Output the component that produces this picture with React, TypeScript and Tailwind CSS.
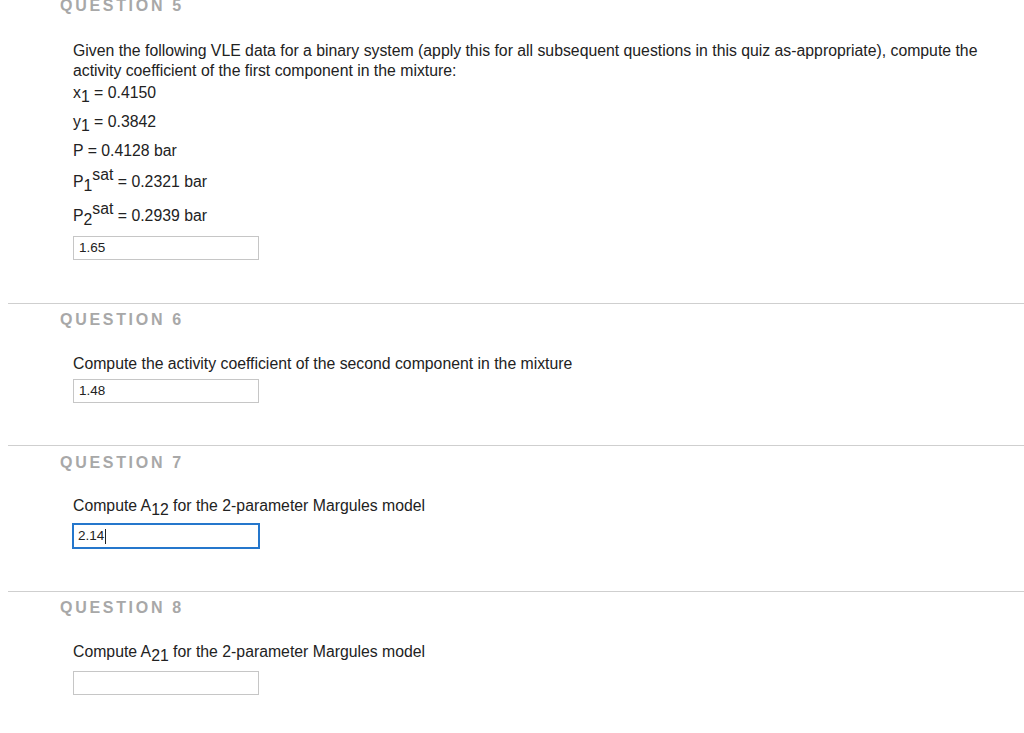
const body = "text-[15.8px] leading-[20px] text-[#222]"

const Header = ({ n, className = "" }: { n: number; className?: string }) => (
  <h3 className={`pl-[52px] text-[16px] leading-[20px] font-bold tracking-[2.7px] text-[#a8a8a8] ${className}`}>
    QUESTION {n}
  </h3>
)

const Answer = ({ value, focused }: { value?: string; focused?: boolean }) => (
  <div
    className={`flex items-center w-[186px] h-[24px] bg-white text-[13.5px] text-[#222] ${
      focused ? "border-2 border-[#2577cc] w-[188px] h-[26px] pl-[4px]" : "border border-[#c6c6c6] pl-[5px]"
    }`}
  >
    {value}
    {focused && <span className="ml-[1px] w-px h-[15px] bg-[#222]" />}
  </div>
)

const Sub = ({ children }: { children: string }) => <span className="relative top-[4px]">{children}</span>
const Sup = ({ children }: { children: string }) => <span className="relative -top-[7px]">{children}</span>

export default function App() {
  return (
    <div className="min-h-screen bg-white" style={{ fontFamily: '"Liberation Sans", Arial, sans-serif' }}>
      {/* question 5 */}
      <section className="pl-[8px]">
        <Header n={5} className="-mt-[4px]" />
        <div className={`pl-[65px] pr-[30px] mt-[25px] ${body}`}>
          <p className="leading-[19.5px]">
            Given the following VLE data for a binary system (apply this for all subsequent questions in this quiz
            as-appropriate), compute the activity coefficient of the first component in the mixture:
          </p>
          <p className="mt-[3px]">
            x<Sub>1</Sub> = 0.4150
          </p>
          <p className="mt-[9px]">
            y<Sub>1</Sub> = 0.3842
          </p>
          <p className="mt-[9px]">P = 0.4128 bar</p>
          <p className="mt-[11px]">
            P<Sub>1</Sub>
            <Sup>sat</Sup> = 0.2321 bar
          </p>
          <p className="mt-[14px]">
            P<Sub>2</Sub>
            <Sup>sat</Sup> = 0.2939 bar
          </p>
          <div className="mt-[10px]">
            <Answer value="1.65" />
          </div>
        </div>
      </section>

      {/* question 6 */}
      <section className="ml-[8px] mt-[43px] border-t border-[#cfcfcf]">
        <Header n={6} className="pt-[6px]" />
        <div className={`pl-[65px] mt-[24px] ${body}`}>
          <p>Compute the activity coefficient of the second component in the mixture</p>
          <div className="mt-[5px]">
            <Answer value="1.48" />
          </div>
        </div>
      </section>

      {/* question 7 */}
      <section className="ml-[8px] mt-[42px] border-t border-[#cfcfcf]">
        <Header n={7} className="pt-[7px]" />
        <div className={`pl-[65px] mt-[23px] ${body}`}>
          <p>
            Compute A<Sub>12</Sub> for the 2-parameter Margules model
          </p>
          <div className="mt-[7px] -ml-[1px]">
            <Answer value="2.14" focused />
          </div>
        </div>
      </section>

      {/* question 8 */}
      <section className="ml-[8px] mt-[42px] border-t border-[#cfcfcf]">
        <Header n={8} className="pt-[6px]" />
        <div className={`pl-[65px] mt-[24px] ${body}`}>
          <p>
            Compute A<Sub>21</Sub> for the 2-parameter Margules model
          </p>
          <div className="mt-[9px]">
            <Answer />
          </div>
        </div>
      </section>
    </div>
  )
}
